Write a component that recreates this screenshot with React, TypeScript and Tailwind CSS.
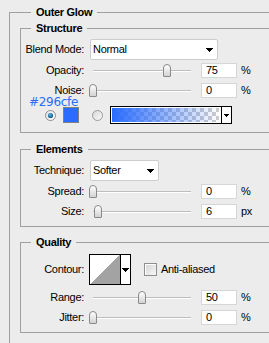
import React from "react";

const DownArrow = ({ w = 7, h = 4 }: { w?: number; h?: number }) => (
  <svg width={w} height={h} viewBox={`0 0 ${w} ${h}`} shapeRendering="crispEdges">
    <path d={`M0 0H${w}L${w / 2} ${h}Z`} fill="#000" />
  </svg>
);

const Label = ({ children }: { children: React.ReactNode }) => (
  <div className="w-[63px] shrink-0 text-right whitespace-nowrap">{children}</div>
);

const Slider = ({ pos }: { pos: number }) => (
  <div className="relative ml-[5px] h-[15px] w-[106px] shrink-0">
    <div className="absolute left-[4px] right-[4px] top-[7px] h-[2px] border-b border-white bg-[#bdbdbd]" />
    <div
      className="absolute top-[1px] h-[13px] w-[8px] rounded-t-[4px] rounded-b-[1px] border border-[#8a8a8a] bg-linear-to-b from-white to-[#d2d2d2]"
      style={{ left: pos }}
    />
  </div>
);

const NumBox = ({ value }: { value: string }) => (
  <div className="ml-[6px] h-[15px] w-[36px] shrink-0 border border-[#d6d6d6] bg-white pl-[4px] leading-[13px]">
    {value}
  </div>
);

const SliderRow = ({
  label,
  pos,
  value,
  unit,
  mt,
}: {
  label: string;
  pos: number;
  value: string;
  unit: string;
  mt: string;
}) => (
  <div className={`flex h-[15px] items-center ${mt}`}>
    <Label>{label}</Label>
    <Slider pos={pos} />
    <NumBox value={value} />
    <div className="ml-[4px]">{unit}</div>
  </div>
);

const Dropdown = ({ text, w }: { text: string; w: string }) => (
  <div
    className={`ml-[6px] flex h-[21px] ${w} shrink-0 items-center justify-between rounded-[2px] border border-[#cdcdcd] bg-white pl-[2px] pr-[4px]`}
  >
    <span>{text}</span>
    <DownArrow />
  </div>
);

const Legend = ({ children, outer }: { children: React.ReactNode; outer?: boolean }) => (
  <legend className={`${outer ? "ml-[11px]" : "ml-[10px]"} px-[5px] text-[11px] font-bold leading-[14px]`}>
    {children}
  </legend>
);

const RadioOn = () => (
  <svg width="11" height="11" viewBox="0 0 11 11">
    <defs>
      <radialGradient id="rdot" cx="0.4" cy="0.35" r="0.7">
        <stop offset="0" stopColor="#5ab7e6" />
        <stop offset="1" stopColor="#0d4f7c" />
      </radialGradient>
      <linearGradient id="rbg1" x1="0" y1="0" x2="1" y2="1">
        <stop offset="0" stopColor="#e2e2e2" />
        <stop offset="1" stopColor="#ffffff" />
      </linearGradient>
    </defs>
    <circle cx="5.5" cy="5.5" r="5" fill="url(#rbg1)" stroke="#8e8e8e" />
    <circle cx="5.5" cy="5.5" r="2.6" fill="url(#rdot)" />
  </svg>
);

const RadioOff = () => (
  <svg width="11" height="11" viewBox="0 0 11 11">
    <defs>
      <linearGradient id="rbg2" x1="0" y1="0" x2="1" y2="1">
        <stop offset="0" stopColor="#d6d6d6" />
        <stop offset="1" stopColor="#fbfbfb" />
      </linearGradient>
    </defs>
    <circle cx="5.5" cy="5.5" r="5" fill="url(#rbg2)" stroke="#9a9a9a" />
  </svg>
);

const GradientPreview = () => (
  <div className="ml-[7px] flex h-[18px] w-[122px] shrink-0 border border-black bg-white">
    <div className="flex-1 p-[1px]">
      <svg width="107" height="14" viewBox="0 0 107 14" shapeRendering="crispEdges">
        <defs>
          <pattern id="ck" width="8" height="8" patternUnits="userSpaceOnUse">
            <rect width="8" height="8" fill="#ffffff" />
            <rect width="4" height="4" fill="#cccccc" />
            <rect x="4" y="4" width="4" height="4" fill="#cccccc" />
          </pattern>
          <linearGradient id="gl" x1="0" y1="0" x2="1" y2="0">
            <stop offset="0" stopColor="#296cfe" stopOpacity="1" />
            <stop offset="1" stopColor="#296cfe" stopOpacity="0" />
          </linearGradient>
        </defs>
        <rect width="107" height="14" fill="url(#ck)" />
        <rect width="107" height="14" fill="url(#gl)" />
      </svg>
    </div>
    <div className="flex w-[10px] items-center justify-center border-l border-black">
      <DownArrow w={5} h={3} />
    </div>
  </div>
);

const ContourBox = () => (
  <div className="ml-[5px] flex h-[31px] w-[42px] shrink-0 border border-black bg-white">
    <div className="w-[30px]">
      <svg width="30" height="29" viewBox="0 0 30 29" shapeRendering="crispEdges">
        <polygon points="0,29 30,0 30,29" fill="#a3a3a3" />
      </svg>
    </div>
    <div className="flex flex-1 items-center justify-center border-l border-black">
      <DownArrow w={7} h={4} />
    </div>
  </div>
);

export default function App() {
  return (
    <div className="h-[343px] w-[269px] overflow-hidden bg-[#ececec] pl-[9px] pt-[5px] font-['Liberation_Sans',Arial,sans-serif] text-[11px] tracking-[-0.3px] text-black">
      <fieldset className="w-[320px] border border-[#a0a0a0] pb-[40px] pl-[10px]">
        <Legend outer>Outer Glow</Legend>

        {/* Structure */}
        <fieldset className="mt-[2px] w-[290px] border border-[#a0a0a0] pb-[8px]">
          <Legend>Structure</Legend>
          <div className="flex flex-col">
            <div className="mt-[4px] flex h-[21px] items-center">
              <Label>Blend Mode:</Label>
              <Dropdown text="Normal" w="w-[128px]" />
            </div>
            <SliderRow label="Opacity:" pos={74} value="75" unit="%" mt="mt-[3px]" />
            <SliderRow label="Noise:" pos={0} value="0" unit="%" mt="mt-[5px]" />
            <div className="relative mt-[8px] flex h-[18px] items-center pl-[24px]">
              <div className="absolute left-[8px] top-[-10px] font-['DejaVu_Sans',sans-serif] text-[12px] leading-[12px] tracking-[-0.3px] text-[#296cfe]">
                #296cfe
              </div>
              <RadioOn />
              <div className="ml-[7px] h-[16px] w-[16px] border border-[#808080] bg-[#296cfe]" />
              <div className="ml-[13px]">
                <RadioOff />
              </div>
              <GradientPreview />
            </div>
          </div>
        </fieldset>

        {/* Elements */}
        <fieldset className="mt-[9px] w-[290px] border border-[#a0a0a0] pb-[7px]">
          <Legend>Elements</Legend>
          <div className="flex flex-col">
            <div className="mt-[4px] flex h-[21px] items-center">
              <Label>Technique:</Label>
              <Dropdown text="Softer" w="w-[69px]" />
            </div>
            <SliderRow label="Spread:" pos={0} value="0" unit="%" mt="mt-[3px]" />
            <SliderRow label="Size:" pos={5} value="6" unit="px" mt="mt-[5px]" />
          </div>
        </fieldset>

        {/* Quality */}
        <fieldset className="mt-[8px] w-[290px] border border-[#a0a0a0] pb-[7px]">
          <Legend>Quality</Legend>
          <div className="flex flex-col">
            <div className="mt-[5px] flex h-[31px] items-center">
              <Label>Contour:</Label>
              <ContourBox />
              <div className="ml-[13px] h-[13px] w-[13px] shrink-0 border border-[#8f8f8f] bg-linear-to-br from-[#d4d4d4] to-[#f8f8f8] shadow-[inset_1px_1px_0_#ffffff]" />
              <div className="ml-[4px]">Anti-aliased</div>
            </div>
            <SliderRow label="Range:" pos={49} value="50" unit="%" mt="mt-[5px]" />
            <SliderRow label="Jitter:" pos={0} value="0" unit="%" mt="mt-[5px]" />
          </div>
        </fieldset>
      </fieldset>
    </div>
  );
}
